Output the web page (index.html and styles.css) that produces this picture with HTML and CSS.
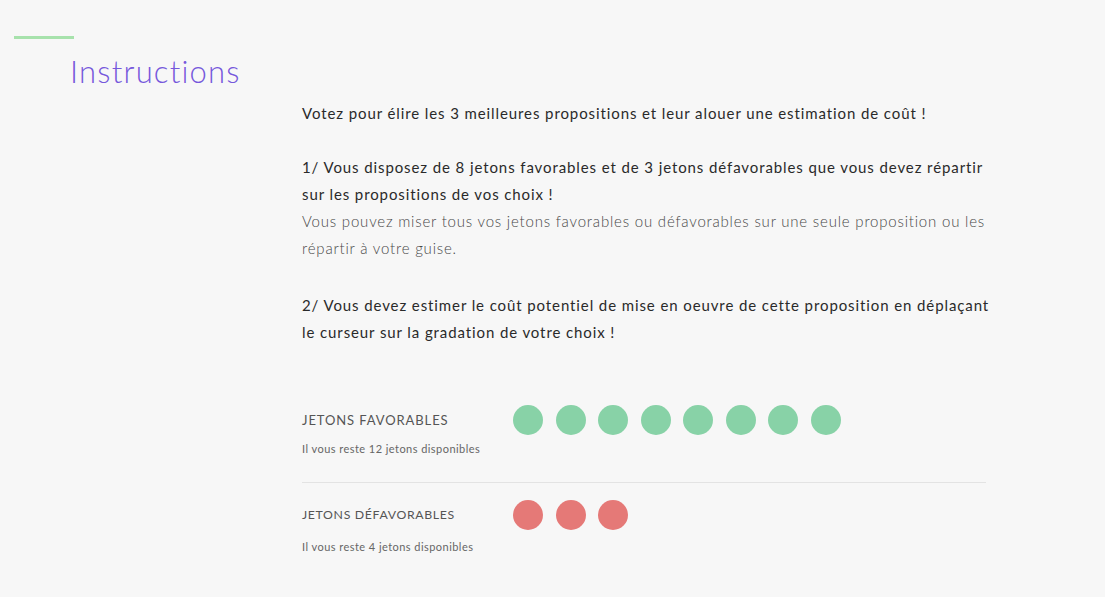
FILE: index.html
```html
<!DOCTYPE html>
<html lang="fr">
<head>
<meta charset="utf-8">
<title>Instructions</title>
<link rel="stylesheet" href="styles.css">
</head>
<body>
<header class="head">
  <div class="accent"></div>
  <h1 class="title">Instructions</h1>
</header>
<main class="content">
  <p class="text">Votez pour élire les 3 meilleures propositions et leur alouer une estimation de coût !</p>
  <p class="text">1/ Vous disposez de 8 jetons favorables et de 3 jetons défavorables que vous devez répartir sur les propositions de vos choix !<br><span class="light">Vous pouvez miser tous vos jetons favorables ou défavorables sur une seule proposition ou les répartir à votre guise.</span></p>
  <p class="text step2">2/ Vous devez estimer le coût potentiel de mise en oeuvre de cette proposition en déplaçant le curseur sur la gradation de votre choix !</p>

  <section class="tokens">
    <div class="row">
      <div class="info">
        <div class="label">JETONS FAVORABLES</div>
        <div class="sub">Il vous reste 12 jetons disponibles</div>
      </div>
      <div class="dots">
        <span class="dot good"></span><span class="dot good"></span><span class="dot good"></span><span class="dot good"></span><span class="dot good"></span><span class="dot good"></span><span class="dot good"></span><span class="dot good"></span>
      </div>
    </div>
    <div class="row second">
      <div class="info">
        <div class="label">JETONS DÉFAVORABLES</div>
        <div class="sub">Il vous reste 4 jetons disponibles</div>
      </div>
      <div class="dots">
        <span class="dot bad"></span><span class="dot bad"></span><span class="dot bad"></span>
      </div>
    </div>
  </section>
</main>
</body>
</html>
```

FILE: styles.css
```css
html, body {
  margin: 0;
  padding: 0;
  background: #f7f7f7;
}
body {
  font-family: Lato, "Open Sans", sans-serif;
  color: #222;
}
.head {
  padding-top: 36px;
}
.accent {
  margin-left: 14px;
  width: 60px;
  height: 3px;
  background: #a7e2ac;
}
.title {
  margin: 12px 0 0 70px;
  font-size: 31px;
  line-height: 40px;
  font-weight: 300;
  letter-spacing: 1.2px;
  color: #7658dc;
}
.content {
  margin: 9px 0 0 302px;
  width: 692px;
}
.text {
  margin: 0 0 27px;
  font-size: 15px;
  line-height: 27px;
  letter-spacing: 0.9px;
  color: #2a2a2a;
}
.light {
  font-weight: 300;
  letter-spacing: 0.8px;
  color: #484848;
}
.step2 {
  margin-top: 30px;
}
.tokens {
  margin-top: 59px;
  width: 684px;
}
.row {
  display: flex;
  align-items: flex-start;
  padding-bottom: 19px;
}
.row.second {
  border-top: 1px solid #e3e3e3;
  padding-top: 17px;
}
.info {
  width: 211px;
  flex: none;
}
.label {
  font-size: 13px;
  line-height: 30px;
  letter-spacing: 0.9px;
  color: #555;
}
.second .label {
  font-size: 12.3px;
  letter-spacing: 0.65px;
}
.sub {
  font-size: 11px;
  line-height: 28px;
  letter-spacing: 0.45px;
  color: #666;
}
.second .sub {
  margin-top: 3px;
}
.dots {
  display: flex;
  gap: 12.5px;
}
.dot {
  width: 30px;
  height: 30px;
  border-radius: 50%;
}
.good { background: #88d2a7; }
.bad { background: #e57977; }
```
